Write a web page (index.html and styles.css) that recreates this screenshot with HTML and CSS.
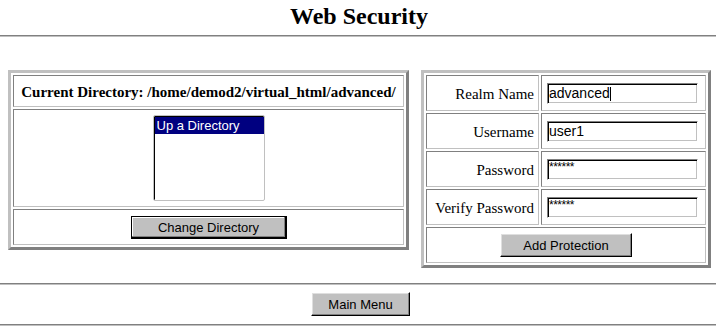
FILE: index.html
```html
<!DOCTYPE html>
<html>
<head>
    <meta charset="UTF-8">
    <meta name="viewport" content="width=device-width, initial-scale=1.0">
    <title>Web Security</title>
    <link rel="stylesheet" href="styles.css">
</head>
<body>
    <h1 class="title">Web Security</h1>
    <hr class="rule">

    <div class="panels">
        <!-- Directory chooser -->
        <table class="panel dir-panel">
            <tr>
                <th class="dir-head">Current Directory: /home/demod2/virtual_html/advanced/</th>
            </tr>
            <tr>
                <td class="dir-list">
                    <select class="listbox" size="5">
                        <option selected>Up a Directory</option>
                    </select>
                </td>
            </tr>
            <tr>
                <td class="action">
                    <button class="btn btn-default btn-change">Change Directory</button>
                </td>
            </tr>
        </table>

        <!-- Protection form -->
        <table class="panel form-panel">
            <tr>
                <td class="label">Realm Name</td>
                <td class="field"><span class="caret-wrap"><input class="text-in" type="text" value="advanced"></span></td>
            </tr>
            <tr>
                <td class="label">Username</td>
                <td class="field"><input class="text-in" type="text" value="user1"></td>
            </tr>
            <tr>
                <td class="label">Password</td>
                <td class="field"><input class="text-in secret" type="text" value="******"></td>
            </tr>
            <tr>
                <td class="label">Verify Password</td>
                <td class="field"><input class="text-in secret" type="text" value="******"></td>
            </tr>
            <tr>
                <td class="action" colspan="2">
                    <button class="btn btn-add">Add Protection</button>
                </td>
            </tr>
        </table>
    </div>

    <hr class="rule rule-flat footer-top">
    <div class="footer">
        <button class="btn btn-menu">Main Menu</button>
    </div>
    <hr class="rule rule-flat">
</body>
</html>
```

FILE: styles.css
```css
body {
    margin: 0;
    font-family: "Liberation Serif", "Times New Roman", serif;
    font-size: 16px;
    color: #000;
    background: #fff;
}
.title {
    margin: 0;
    padding: 3px 0 0 2px;
    font-size: 24px;
    line-height: 27px;
    text-align: center;
}
.rule {
    height: 0;
    margin: 5px 0 0;
    border: 0;
    border-top: 1px solid #808080;
    border-bottom: 1px solid #c0c0c0;
}
.rule-flat { margin: 0; }
.footer-top { margin-top: 15px; }

.panels {
    display: flex;
    align-items: flex-start;
    gap: 12px;
    margin-top: 33px;
    padding-left: 8px;
}
.panel {
    box-sizing: border-box;
    border-collapse: separate;
    border-spacing: 2px;
    border: 3px solid;
    border-color: #c0c0c0 #808080 #808080 #c0c0c0;
}
.panel th, .panel td {
    box-sizing: border-box;
    padding: 0 4px;
    border: 1px solid;
    border-color: #808080 #c0c0c0 #c0c0c0 #808080;
}
.dir-panel { width: 401px; }
.form-panel { width: 290px; }

.dir-head {
    height: 32px;
    font-size: 15px;
    text-align: center;
    white-space: nowrap;
    padding-top: 2px !important;
}
.dir-list { height: 98px; }
.action { height: 36px; }

.listbox {
    display: block;
    box-sizing: border-box;
    width: 112px;
    height: 86px;
    margin: 0 auto;
    padding: 1px 0 0 1px;
    border: 1px solid #c0c0c0;
    box-shadow: inset 1px 1px #000;
    background: #fff;
    font-family: "Liberation Sans", Arial, sans-serif;
    font-size: 13px;
    overflow: hidden;
    outline: none;
}
.listbox option {
    padding: 1px 2px 0;
    line-height: 16px;
}
.listbox option:checked {
    background: #000080 linear-gradient(#000080, #000080);
    color: #fff;
}

.form-panel td { height: 36px; }
.label {
    width: 113px;
    font-size: 15px;
    text-align: right;
    white-space: nowrap;
    padding-top: 2px !important;
}
.field {
    width: 165px;
    padding: 0 5px !important;
}
.text-in {
    display: block;
    box-sizing: border-box;
    width: 151px;
    height: 21px;
    margin: 0;
    padding: 0 1px;
    border: 1px solid;
    border-color: #808080 #fff #fff #808080;
    box-shadow: inset 1px 1px #000, inset -1px -1px #c0c0c0;
    background: #fff;
    font-family: "Liberation Sans", Arial, sans-serif;
    font-size: 14px;
    color: #000;
    outline: none;
}
.secret {
    font-size: 12px;
    letter-spacing: -0.5px;
    padding-top: 0;
    padding-bottom: 5px;
}
.caret-wrap {
    position: relative;
    display: block;
    width: 151px;
}
.caret-wrap::after {
    content: "";
    position: absolute;
    left: 63px;
    top: 4px;
    width: 1px;
    height: 14px;
    background: #000;
}

.btn {
    display: block;
    box-sizing: border-box;
    height: 24px;
    margin: 0 auto;
    padding: 0;
    border: 1px solid;
    border-color: #fff #000 #000 #fff;
    box-shadow: inset -1px -1px #808080, inset 1px 1px #dfdfdf;
    background: #c0c0c0;
    font-family: "Liberation Sans", Arial, sans-serif;
    font-size: 13px;
    color: #000;
    cursor: pointer;
}
.btn-default {
    border-color: #000;
    box-shadow: inset -1px -1px #000, inset -2px -2px #808080, inset 1px 1px #fff;
}
.btn-change { width: 156px; height: 23px; }
.btn-add { width: 132px; }
.btn-menu { width: 99px; }

.footer {
    display: flex;
    justify-content: center;
    padding: 7px 0 8px 5px;
}
```
